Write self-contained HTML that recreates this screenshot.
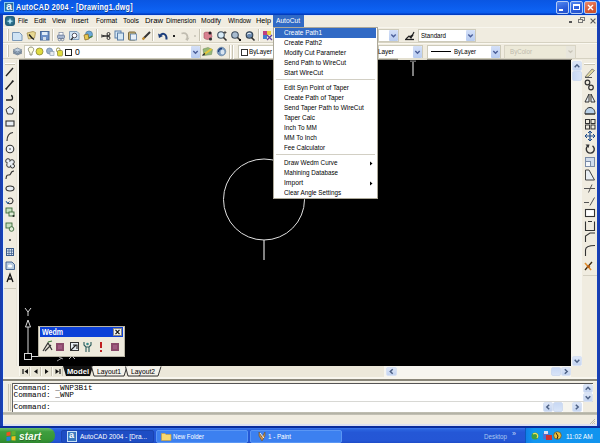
<!DOCTYPE html>
<html><head><meta charset="utf-8">
<style>
*{margin:0;padding:0;box-sizing:border-box}
html,body{width:600px;height:443px;overflow:hidden;background:#F0ECE0;font-family:"Liberation Sans",sans-serif;position:relative}
.a{position:absolute}
.t{position:absolute;white-space:nowrap;line-height:1}
svg{overflow:visible}
</style></head><body>
<div class="a" style="left:0px;top:0px;width:600px;height:15px;background:linear-gradient(#0A56E2,#0B5CEC 40%,#0E62F2 70%,#0C5EEE 85%,#0444CC 92%,#0038B8);border-radius:2px 4px 0 0"></div>
<div class="a" style="left:0px;top:15px;width:3px;height:413px;background:linear-gradient(90deg,#1C3CA4,#1442C0)"></div>
<div class="a" style="left:597px;top:15px;width:3px;height:413px;background:linear-gradient(90deg,#1442C0,#1C3CA4)"></div>
<div class="a" style="left:0px;top:426px;width:600px;height:2px;background:#0A2C9C"></div>
<div class="a" style="left:4px;top:2px;width:10px;height:10px;border:1px solid #8CCCF0;background:#2A6C9C"></div>
<div class="t" style="left:6.2px;top:1.8px;font-size:10px;color:#F0F8FF;font-weight:bold;font-family:'Liberation Sans',sans-serif;transform:scaleX(1.079);transform-origin:0 0;">a</div>
<div class="t" style="left:16px;top:3.4px;font-size:9.2px;color:#fff;font-weight:bold;font-family:'Liberation Sans',sans-serif;transform:scaleX(0.769);transform-origin:0 0;letter-spacing:0.4px;text-shadow:0.6px 0.6px 0 #0A3A98;">AutoCAD 2004 - [Drawing1.dwg]</div>
<div class="a" style="left:556px;top:1px;width:13px;height:13px;border:1px solid #B4CCF4;border-radius:2px;background:linear-gradient(160deg,#5288F0,#2A5CD8 60%,#2450CC)"></div>
<div class="a" style="left:570px;top:1px;width:13px;height:13px;border:1px solid #B4CCF4;border-radius:2px;background:linear-gradient(160deg,#5288F0,#2A5CD8 60%,#2450CC)"></div>
<div class="a" style="left:584px;top:1px;width:13px;height:13px;border:1px solid #B4CCF4;border-radius:2px;background:linear-gradient(160deg,#EC8A6A,#D45A38 60%,#C84C2C)"></div>
<div class="a" style="left:559px;top:9px;width:4px;height:2px;background:#fff"></div>
<div class="a" style="left:573px;top:4px;width:7px;height:6px;border:1px solid #fff;border-top-width:2px"></div>
<svg class="a" style="left:584px;top:1px" width="13" height="13" viewBox="0 0 13 13"><path d="M4 4L9 9M9 4L4 9" stroke="#fff" stroke-width="1.4"/></svg>
<div class="a" style="left:3px;top:15px;width:594px;height:1px;background:#DDE4F4"></div>
<div class="a" style="left:5px;top:16px;width:10px;height:10px;background:radial-gradient(#3A8AA8,#1A4E68);border-radius:3px"></div>
<svg class="a" style="left:5px;top:16px" width="10" height="10" viewBox="0 0 10 10"><path d="M5 2L6 4.5L8.5 5L6 6L5 8.5L4 6L1.5 5L4 4.5Z" fill="#B8E8F8"/></svg>
<div class="t" style="left:17.5px;top:17.6px;font-size:6.8px;color:#000;font-weight:normal;font-family:'Liberation Sans',sans-serif;transform:scaleX(0.913);transform-origin:0 0;">File</div>
<div class="t" style="left:33.5px;top:17.6px;font-size:6.8px;color:#000;font-weight:normal;font-family:'Liberation Sans',sans-serif;transform:scaleX(1.025);transform-origin:0 0;">Edit</div>
<div class="t" style="left:51.5px;top:17.6px;font-size:6.8px;color:#000;font-weight:normal;font-family:'Liberation Sans',sans-serif;transform:scaleX(0.958);transform-origin:0 0;">View</div>
<div class="t" style="left:71.5px;top:17.6px;font-size:6.8px;color:#000;font-weight:normal;font-family:'Liberation Sans',sans-serif;transform:scaleX(1.000);transform-origin:0 0;">Insert</div>
<div class="t" style="left:95.5px;top:17.6px;font-size:6.8px;color:#000;font-weight:normal;font-family:'Liberation Sans',sans-serif;transform:scaleX(0.976);transform-origin:0 0;">Format</div>
<div class="t" style="left:122.5px;top:17.6px;font-size:6.8px;color:#000;font-weight:normal;font-family:'Liberation Sans',sans-serif;transform:scaleX(1.008);transform-origin:0 0;">Tools</div>
<div class="t" style="left:144.5px;top:17.6px;font-size:6.8px;color:#000;font-weight:normal;font-family:'Liberation Sans',sans-serif;transform:scaleX(1.135);transform-origin:0 0;">Draw</div>
<div class="t" style="left:165.5px;top:17.6px;font-size:6.8px;color:#000;font-weight:normal;font-family:'Liberation Sans',sans-serif;transform:scaleX(0.934);transform-origin:0 0;">Dimension</div>
<div class="t" style="left:200.5px;top:17.6px;font-size:6.8px;color:#000;font-weight:normal;font-family:'Liberation Sans',sans-serif;transform:scaleX(0.999);transform-origin:0 0;">Modify</div>
<div class="t" style="left:227.5px;top:17.6px;font-size:6.8px;color:#000;font-weight:normal;font-family:'Liberation Sans',sans-serif;transform:scaleX(0.951);transform-origin:0 0;">Window</div>
<div class="t" style="left:255.5px;top:17.6px;font-size:6.8px;color:#000;font-weight:normal;font-family:'Liberation Sans',sans-serif;transform:scaleX(1.073);transform-origin:0 0;">Help</div>
<div class="a" style="left:273px;top:15px;width:31px;height:12px;background:#316AC5"></div>
<div class="t" style="left:275.5px;top:17.6px;font-size:6.8px;color:#fff;font-weight:normal;font-family:'Liberation Sans',sans-serif;transform:scaleX(0.977);transform-origin:0 0;">AutoCut</div>
<div class="a" style="left:568.5px;top:21px;width:3.5px;height:1.5px;background:#555"></div>
<svg class="a" style="left:578px;top:17px" width="7" height="6" viewBox="0 0 7 6"><rect x="2.5" y="0.5" width="4" height="3" fill="none" stroke="#777" stroke-width="1"/><rect x="0.5" y="2.5" width="4" height="3" fill="#F0ECE0" stroke="#777" stroke-width="1"/></svg>
<svg class="a" style="left:590px;top:18px" width="6" height="6" viewBox="0 0 6 6"><path d="M0.6 0.6L5.4 5.4M5.4 0.6L0.6 5.4" stroke="#555" stroke-width="1.1"/></svg>
<div class="a" style="left:3px;top:27px;width:594px;height:1px;background:#F8F6EE"></div>
<div class="a" style="left:3px;top:42px;width:594px;height:1px;background:#D6D2C2"></div>
<div class="a" style="left:3px;top:43px;width:594px;height:1px;background:#FAF8F0"></div>
<div class="a" style="left:3px;top:58px;width:594px;height:1px;background:#D6D2C2"></div>
<div class="a" style="left:7px;top:29px;width:2px;height:12px;border-left:1px solid #fff;border-right:1px solid #C8C4B4"></div>
<div class="a" style="left:7px;top:45px;width:2px;height:12px;border-left:1px solid #fff;border-right:1px solid #C8C4B4"></div>
<div class="a" style="left:52px;top:29px;width:2px;height:12px;border-left:1px solid #C8C4B4;border-right:1px solid #fff"></div>
<div class="a" style="left:96px;top:29px;width:2px;height:12px;border-left:1px solid #C8C4B4;border-right:1px solid #fff"></div>
<div class="a" style="left:152px;top:29px;width:2px;height:12px;border-left:1px solid #C8C4B4;border-right:1px solid #fff"></div>
<div class="a" style="left:199px;top:29px;width:2px;height:12px;border-left:1px solid #C8C4B4;border-right:1px solid #fff"></div>
<div class="a" style="left:258px;top:29px;width:2px;height:12px;border-left:1px solid #C8C4B4;border-right:1px solid #fff"></div>
<svg class="a" style="left:12px;top:31px" width="11" height="10" viewBox="0 0 11 10"><path d="M0.5 1.5H7.5L10 4V9.5H0.5Z" fill="#D0E4F4" stroke="#7A98B8" stroke-width="1"/></svg>
<svg class="a" style="left:26px;top:30px" width="11" height="11" viewBox="0 0 11 11"><path d="M1 3L7 1.5L9.5 2.5L8.5 8L2.5 9Z" fill="#E8D890" stroke="#A89050" stroke-width="0.8"/><path d="M3 4.5L5.5 7.5L8 9.5" stroke="#222" stroke-width="1.5" fill="none"/></svg>
<svg class="a" style="left:40px;top:31px" width="10" height="10" viewBox="0 0 10 10"><rect x="0.5" y="0.5" width="8.5" height="8.5" fill="#6C90C8" stroke="#4A6A9A"/><rect x="2" y="1" width="5.5" height="3" fill="#E0ECF8"/><rect x="3" y="6" width="3" height="3" fill="#D0DCEC"/></svg>
<svg class="a" style="left:56px;top:31px" width="10" height="10" viewBox="0 0 10 10"><rect x="1.5" y="4" width="7" height="3.5" rx="1" fill="#A8B8D0" stroke="#6A7A98" stroke-width="0.8"/><rect x="3" y="1.5" width="4" height="2.5" fill="#fff" stroke="#7A88A0" stroke-width="0.7"/><circle cx="3.5" cy="8.5" r="1.3" fill="none" stroke="#6A7A98" stroke-width="0.8"/><circle cx="6.5" cy="8.5" r="1.3" fill="none" stroke="#6A7A98" stroke-width="0.8"/></svg>
<svg class="a" style="left:69px;top:31px" width="11" height="10" viewBox="0 0 11 10"><path d="M0.5 0.5H8L10 2.5V8.5H0.5Z" fill="#D0E4F4" stroke="#7A98B8" stroke-width="0.9"/><circle cx="5.5" cy="4.5" r="2.3" fill="#fff" stroke="#445" stroke-width="0.9"/><path d="M4 6.3L2 9" stroke="#333" stroke-width="1.3"/></svg>
<svg class="a" style="left:83px;top:30px" width="11" height="11" viewBox="0 0 11 11"><circle cx="6" cy="4.5" r="3.5" fill="#6AA8D8" stroke="#4A7898" stroke-width="0.7"/><path d="M1 5L5 4L6 9L2 10Z" fill="#E8C850" stroke="#806020" stroke-width="0.7"/><path d="M6 8L9.5 6" stroke="#4A8030" stroke-width="1.3"/></svg>
<svg class="a" style="left:100px;top:31px" width="11" height="10" viewBox="0 0 11 10"><path d="M1 4L10 6M1 6L10 4" stroke="#333" stroke-width="1"/><circle cx="8.5" cy="3" r="1.5" fill="none" stroke="#333"/><circle cx="8.5" cy="7" r="1.5" fill="none" stroke="#333"/></svg>
<svg class="a" style="left:114px;top:30px" width="11" height="11" viewBox="0 0 11 11"><rect x="1" y="1" width="6" height="7" fill="#D6E8F4" stroke="#5A7FA8"/><rect x="3.5" y="3" width="6" height="7" fill="#D6E8F4" stroke="#5A7FA8"/></svg>
<svg class="a" style="left:127px;top:30px" width="11" height="11" viewBox="0 0 11 11"><rect x="1.5" y="2" width="7" height="8" rx="1" fill="#C8B070" stroke="#7A6A40"/><rect x="3.5" y="4" width="6" height="6" fill="#E8F0F8" stroke="#5A7FA8" stroke-width="0.8"/></svg>
<svg class="a" style="left:141px;top:30px" width="11" height="11" viewBox="0 0 11 11"><path d="M2 9L9 2" stroke="#333" stroke-width="2"/><path d="M1.5 9.5L3.5 7.5" stroke="#C89030" stroke-width="2"/></svg>
<svg class="a" style="left:157px;top:30px" width="12" height="12" viewBox="0 0 12 12"><path d="M9.5 9.5C10 4 6 2.5 3.5 5" stroke="#1A3C7A" stroke-width="2" fill="none"/><path d="M1 3.5L2 8L6 6Z" fill="#1A3C7A"/></svg>
<div class="a" style="left:173px;top:35px;width:2px;height:2px;background:#222"></div>
<svg class="a" style="left:180px;top:30px" width="11" height="12" viewBox="0 0 11 12"><path d="M1.5 3.5C6 2 8.5 5 7 9.5" stroke="#C0BCB0" stroke-width="1.8" fill="none"/><path d="M5 9L7.5 11L9.5 7.5Z" fill="#C0BCB0"/></svg>
<div class="a" style="left:194px;top:35px;width:2px;height:2px;background:#D0CCC0"></div>
<svg class="a" style="left:202px;top:30px" width="12" height="12" viewBox="0 0 12 12"><path d="M2 3C4 1 7 3 9 2L10 7C8 10 4 10 2 8Z" fill="#D88090" stroke="#A05060" stroke-width="0.6"/><circle cx="8" cy="3" r="1.5" fill="#222"/><circle cx="8.5" cy="9" r="1.6" fill="#333"/></svg>
<svg class="a" style="left:216px;top:30px" width="12" height="12" viewBox="0 0 12 12"><circle cx="5" cy="5" r="3.3" fill="#D8ECF8" stroke="#405060" stroke-width="1.1"/><path d="M7.5 7.5L10.5 10.5" stroke="#333" stroke-width="1.6"/><path d="M9 1V4M7.5 2.5H10.5" stroke="#333" stroke-width="0.8"/></svg>
<svg class="a" style="left:230px;top:30px" width="12" height="12" viewBox="0 0 12 12"><circle cx="5" cy="5" r="3.3" fill="#A8BCD0" stroke="#405060" stroke-width="1.1"/><path d="M7.5 7.5L10 10" stroke="#333" stroke-width="1.6"/><rect x="9" y="9" width="2" height="2" fill="#111"/></svg>
<svg class="a" style="left:244px;top:30px" width="12" height="12" viewBox="0 0 12 12"><circle cx="5.5" cy="5" r="3.3" fill="#6A8AB0" stroke="#304050" stroke-width="1.1"/><path d="M7.5 7.5L10.5 10.5" stroke="#333" stroke-width="1.6"/><path d="M3 4.5C4 3 6 3 7 4" stroke="#fff" stroke-width="0.9" fill="none"/></svg>
<svg class="a" style="left:262px;top:30px" width="11" height="11" viewBox="0 0 11 11"><rect x="1" y="1" width="4" height="4" fill="#C04080"/><rect x="5" y="1" width="4" height="4" fill="#E8D040"/><rect x="1" y="5" width="4" height="4" fill="#4080D0"/><path d="M5 5L10 10M10 5L5 10" stroke="#6040A0" stroke-width="1.3"/></svg>
<div class="a" style="left:378px;top:29px;width:21px;height:13px;background:#fff;border:1px solid #CDCAB9"></div>
<div class="a" style="left:389px;top:30px;width:9px;height:11px;background:linear-gradient(#D4E0F8,#B8CCF0);border-radius:1px"></div>
<svg class="a" style="left:389px;top:30px" width="9" height="11" viewBox="0 0 9 11"><path d="M2.3 4.5L4.5 6.7L6.7 4.5" stroke="#4A5E98" stroke-width="1.4" fill="none"/></svg>
<svg class="a" style="left:404px;top:31px" width="11" height="10" viewBox="0 0 11 10"><path d="M1 8.5H10" stroke="#222" stroke-width="1.3"/><path d="M2 8L5 5L7 7L10 1" stroke="#222" stroke-width="1.2" fill="none"/><path d="M6 6L9 4" stroke="#222" stroke-width="1.8"/></svg>
<div class="a" style="left:418px;top:29px;width:58px;height:13px;background:#fff;border:1px solid #CDCAB9"></div>
<div class="a" style="left:466px;top:30px;width:9px;height:11px;background:linear-gradient(#D4E0F8,#B8CCF0);border-radius:1px"></div>
<svg class="a" style="left:466px;top:30px" width="9" height="11" viewBox="0 0 9 11"><path d="M2.3 4.5L4.5 6.7L6.7 4.5" stroke="#4A5E98" stroke-width="1.4" fill="none"/></svg>
<div class="t" style="left:421px;top:32.8px;font-size:6.8px;color:#000;font-weight:normal;font-family:'Liberation Sans',sans-serif;transform:scaleX(0.906);transform-origin:0 0;">Standard</div>
<div class="a" style="left:12px;top:48px;width:10px;height:8px;"></div>
<svg class="a" style="left:12px;top:47px" width="11" height="10" viewBox="0 0 11 10"><path d="M1 6L5.5 4L10 6L5.5 8Z" fill="#8AA0B8" stroke="#5A6C80" stroke-width="0.6"/><path d="M1 4.5L5.5 2.5L10 4.5L5.5 6.5Z" fill="#A8BCD0" stroke="#5A6C80" stroke-width="0.6"/><path d="M1 3L5.5 1L10 3L5.5 5Z" fill="#C0D0E0" stroke="#5A6C80" stroke-width="0.6"/></svg>
<div class="a" style="left:24px;top:45px;width:177px;height:14px;background:#fff;border:1px solid #CDCAB9"></div>
<div class="a" style="left:191px;top:46px;width:9px;height:12px;background:linear-gradient(#D4E0F8,#B8CCF0);border-radius:1px"></div>
<svg class="a" style="left:191px;top:46px" width="9" height="12" viewBox="0 0 9 12"><path d="M2.3 5.0L4.5 7.2L6.7 5.0" stroke="#4A5E98" stroke-width="1.4" fill="none"/></svg>
<svg class="a" style="left:27px;top:46px" width="8" height="11" viewBox="0 0 8 11"><path d="M4 1C1.5 1 1 3 1.5 4.5L3 7V9H5V7L6.5 4.5C7 3 6.5 1 4 1Z" fill="#FFFDE0" stroke="#7A7A60" stroke-width="0.8"/></svg>
<svg class="a" style="left:35px;top:47px" width="10" height="10" viewBox="0 0 10 10"><circle cx="4.5" cy="4.5" r="3.5" fill="#E0DC40" stroke="#8A8430" stroke-width="0.8"/></svg>
<svg class="a" style="left:46px;top:47px" width="9" height="10" viewBox="0 0 9 10"><circle cx="3.5" cy="4" r="3" fill="#98B0CC" stroke="#7088A8" stroke-width="0.8"/><rect x="4" y="4.5" width="4" height="4" fill="#E8ECF0" stroke="#8898A8" stroke-width="0.6"/></svg>
<svg class="a" style="left:55px;top:47px" width="9" height="10" viewBox="0 0 9 10"><rect x="1.5" y="1" width="3.5" height="4" rx="1.5" fill="none" stroke="#8A8430" stroke-width="0.9"/><rect x="2.5" y="3.5" width="5" height="5.5" rx="1" fill="#E0DC40" stroke="#8A8430" stroke-width="0.7"/></svg>
<div class="a" style="left:65px;top:49px;width:7px;height:7px;border:1px solid #222;background:#fff"></div>
<div class="t" style="left:74.5px;top:48.2px;font-size:8.5px;color:#000;font-weight:normal;font-family:'Liberation Sans',sans-serif;transform:scaleX(1.015);transform-origin:0 0;">0</div>
<svg class="a" style="left:202px;top:46px" width="11" height="11" viewBox="0 0 11 11"><path d="M1 3L6 1.5L10.5 3.5L9.5 8.5L2 9.5Z" fill="#98B878" stroke="#6A8850" stroke-width="0.5"/><path d="M2.5 8L9.5 3" stroke="#E8C838" stroke-width="2"/><path d="M0.5 9.5L3 7.5" stroke="#222" stroke-width="1.2"/></svg>
<svg class="a" style="left:216px;top:46px" width="11" height="11" viewBox="0 0 11 11"><circle cx="5.5" cy="5.5" r="4.3" fill="#7C9CC0" stroke="#5A7898" stroke-width="0.6"/><ellipse cx="6.5" cy="6" rx="2" ry="2.5" fill="#D8E4F0"/><path d="M6 2.5C4 2.5 2.5 3.5 2.5 6" stroke="#1A3C7A" stroke-width="1.3" fill="none"/></svg>
<div class="a" style="left:229px;top:45px;width:2px;height:14px;border-left:1px solid #C8C4B4;border-right:1px solid #fff"></div>
<div class="a" style="left:232px;top:45px;width:2px;height:14px;border-left:1px solid #C8C4B4;border-right:1px solid #fff"></div>
<div class="a" style="left:238px;top:45px;width:140px;height:14px;background:#fff;border:1px solid #CDCAB9"></div>
<div class="a" style="left:368px;top:46px;width:9px;height:12px;background:linear-gradient(#D4E0F8,#B8CCF0);border-radius:1px"></div>
<svg class="a" style="left:368px;top:46px" width="9" height="12" viewBox="0 0 9 12"><path d="M2.3 5.0L4.5 7.2L6.7 5.0" stroke="#4A5E98" stroke-width="1.4" fill="none"/></svg>
<div class="a" style="left:241px;top:49px;width:7px;height:7px;border:1px solid #333;background:#fff"></div>
<div class="t" style="left:249px;top:49.2px;font-size:6.8px;color:#000;font-weight:normal;font-family:'Liberation Sans',sans-serif;transform:scaleX(0.922);transform-origin:0 0;">ByLayer</div>
<div class="a" style="left:378px;top:45px;width:45px;height:14px;background:#fff;border:1px solid #CDCAB9"></div>
<div class="a" style="left:413px;top:46px;width:9px;height:12px;background:linear-gradient(#D4E0F8,#B8CCF0);border-radius:1px"></div>
<svg class="a" style="left:413px;top:46px" width="9" height="12" viewBox="0 0 9 12"><path d="M2.3 5.0L4.5 7.2L6.7 5.0" stroke="#4A5E98" stroke-width="1.4" fill="none"/></svg>
<div class="t" style="left:377.5px;top:49.2px;font-size:6.8px;color:#000;font-weight:normal;font-family:'Liberation Sans',sans-serif;transform:scaleX(0.941);transform-origin:0 0;">Layer</div>
<div class="a" style="left:427px;top:45px;width:74px;height:14px;background:#fff;border:1px solid #CDCAB9"></div>
<div class="a" style="left:491px;top:46px;width:9px;height:12px;background:linear-gradient(#D4E0F8,#B8CCF0);border-radius:1px"></div>
<svg class="a" style="left:491px;top:46px" width="9" height="12" viewBox="0 0 9 12"><path d="M2.3 5.0L4.5 7.2L6.7 5.0" stroke="#4A5E98" stroke-width="1.4" fill="none"/></svg>
<div class="a" style="left:431px;top:51px;width:20px;height:1px;background:#000"></div>
<div class="t" style="left:454px;top:49.2px;font-size:6.8px;color:#000;font-weight:normal;font-family:'Liberation Sans',sans-serif;transform:scaleX(0.882);transform-origin:0 0;">ByLayer</div>
<div class="a" style="left:504px;top:45px;width:72px;height:14px;background:#ECE9D8;border:1px solid #D8D4C4"></div>
<div class="a" style="left:566px;top:46px;width:9px;height:12px;background:#E8E6DC"></div>
<svg class="a" style="left:566px;top:46px" width="9" height="12" viewBox="0 0 9 12"><path d="M2.5 4.5L4.5 6.5L6.5 4.5" stroke="#C8C4B8" stroke-width="1.2" fill="none"/></svg>
<div class="t" style="left:509.5px;top:49.2px;font-size:6.8px;color:#BDB9AC;font-weight:normal;font-family:'Liberation Sans',sans-serif;transform:scaleX(0.910);transform-origin:0 0;">ByColor</div>
<div class="a" style="left:19px;top:59px;width:553px;height:1px;background:#8E8B80"></div>
<div class="a" style="left:19px;top:60px;width:552px;height:306px;background:#000"></div>
<svg class="a" style="left:19px;top:60px" width="552" height="306" viewBox="0 0 552 306"><circle cx="245" cy="139.5" r="40.5" fill="none" stroke="#E0E0E0" stroke-width="1"/><path d="M245 180V200" stroke="#D8D8D8" stroke-width="1.2"/><path d="M394 1V16" stroke="#A8A8A8" stroke-width="1.5"/><path d="M391 1.2H397" stroke="#606060" stroke-width="1.6"/></svg>
<div class="a" style="left:398px;top:58px;width:29px;height:2px;background:#E4E0D0"></div>
<svg class="a" style="left:19px;top:300px" width="60" height="66" viewBox="0 0 60 66"><path d="M6 8L9 12L12 8M9 12V16" stroke="#D8D8D8" stroke-width="1" fill="none"/><path d="M9 20L6.5 27H11.5Z" fill="none" stroke="#D8D8D8" stroke-width="1"/><path d="M9 27V53" stroke="#D8D8D8" stroke-width="1"/><rect x="5.5" y="53.5" width="7" height="6" fill="none" stroke="#D8D8D8" stroke-width="1"/><path d="M12.5 56.5H22" stroke="#D8D8D8" stroke-width="1"/><path d="M38 61L43 58M40 57L44 59" stroke="#C0C0C0" stroke-width="0.8" fill="none"/><path d="M50 59L53 56L56 59" stroke="#D0D0D0" stroke-width="0.9" fill="none"/></svg>
<div class="a" style="left:3px;top:60px;width:1px;height:366px;background:#E4F0FA"></div>
<div class="a" style="left:16px;top:60px;width:1px;height:306px;background:#E8E4D8"></div>
<div class="a" style="left:17px;top:60px;width:2px;height:306px;background:#F4F2EA"></div>
<div class="a" style="left:5px;top:63px;width:10px;height:2px;border-top:1px solid #fff;border-bottom:1px solid #C8C4B4"></div>
<div class="a" style="left:4px;top:288px;width:12px;height:1px;background:#D0CCBC"></div>
<svg class="a" style="left:0px;top:0px" width="20" height="300" viewBox="0 0 20 300"><path d="M6 76L13 68" stroke="#222" stroke-width="1.3"/><path d="M6 89L13 81" stroke="#222" stroke-width="1.3"/><circle cx="6.3" cy="88.7" r="1" fill="#222"/><circle cx="12.7" cy="81.3" r="1" fill="#222"/><path d="M6 100H11C13 100 13 95.5 11 95.5" stroke="#222" stroke-width="1.3" fill="none"/><path d="M10 106.5L14 109.5L12.5 114H7.5L6 109.5Z" fill="#E8EEF4" stroke="#333" stroke-width="1"/><rect x="6" y="121" width="8" height="5" fill="#E8EEF4" stroke="#333" stroke-width="1.1"/><path d="M7 141C7 136 9 133 13 132.5" stroke="#333" stroke-width="1.2" fill="none"/><circle cx="10" cy="149" r="3.8" fill="#F0F4F8" stroke="#333" stroke-width="1.1"/><circle cx="10" cy="149" r="0.8" fill="#333"/><circle cx="8" cy="161" r="2.3" fill="#E8EEF4" stroke="#333" stroke-width="1"/><circle cx="12" cy="162" r="2.3" fill="#E8EEF4" stroke="#333" stroke-width="1"/><circle cx="9" cy="165" r="2.3" fill="#E8EEF4" stroke="#333" stroke-width="1"/><circle cx="12.5" cy="166" r="2" fill="#E8EEF4" stroke="#333" stroke-width="1"/><ellipse cx="10" cy="163.5" rx="2.5" ry="2" fill="#E8EEF4"/><path d="M6 179C6.5 172 9.5 177 10.5 174C11.5 171 12.5 171 14 171" stroke="#333" stroke-width="1.1" fill="none"/><ellipse cx="10" cy="188.5" rx="4" ry="2.5" fill="#E8EEF4" stroke="#333" stroke-width="1.1"/><path d="M8 198.5C12 197 14 200 12.5 202.5C11 204.5 8 204 7 202.5" stroke="#333" stroke-width="1.1" fill="none"/><path d="M6 201L7.5 203.5L9.5 201.5" stroke="#2A6AB0" stroke-width="1" fill="none"/><rect x="6" y="208" width="6" height="5" fill="#C8E0C0" stroke="#3A6A3A" stroke-width="0.9"/><rect x="9" y="212" width="5" height="4" fill="#E0ECD8" stroke="#3A6A3A" stroke-width="0.9"/><circle cx="13.5" cy="216" r="1" fill="#222"/><rect x="6" y="223" width="6" height="5" fill="#C8E0C0" stroke="#3A6A3A" stroke-width="0.9"/><circle cx="11.5" cy="229" r="2.3" fill="#E0ECD8" stroke="#3A6A3A" stroke-width="0.9"/><circle cx="10" cy="240" r="1" fill="#333"/><rect x="6.5" y="248.5" width="7" height="7" fill="#D8E4F0" stroke="#3A5A8A" stroke-width="1"/><path d="M6 251H14M6 253.5H14M9 248V256M11.5 248V256" stroke="#3A5A8A" stroke-width="0.7"/><path d="M6 262H12L14.5 264.5V269.5H6Z" fill="#B8CCE0" stroke="#3A5A8A" stroke-width="0.9"/><ellipse cx="10" cy="266" rx="2.2" ry="1.6" fill="#fff"/><path d="M7 282L10 274L13 282M8.2 279H11.8" stroke="#111" stroke-width="1.3" fill="none"/></svg>
<div class="a" style="left:571px;top:60px;width:11px;height:306px;background:#F6F5EF"></div>
<div class="a" style="left:572px;top:61px;width:10px;height:10px;background:linear-gradient(#DCE6F8,#C4D4F0);border:1px solid #D8E2F4;border-radius:2px"></div>
<svg class="a" style="left:0px;top:0px" width="1" height="1" viewBox="0 0 1 1"><path d="M574.7 67.2L577.0 64.8L579.3 67.2" stroke="#4D6185" stroke-width="1.5" fill="none"/></svg>
<div class="a" style="left:572px;top:71px;width:10px;height:10px;background:linear-gradient(90deg,#C8D8F4,#D8E4F8);border:1px solid #D0DCF0;border-radius:2px"></div>
<div class="a" style="left:572px;top:356px;width:10px;height:10px;background:linear-gradient(#DCE6F8,#C4D4F0);border:1px solid #D8E2F4;border-radius:2px"></div>
<svg class="a" style="left:0px;top:0px" width="1" height="1" viewBox="0 0 1 1"><path d="M574.7 359.8L577.0 362.2L579.3 359.8" stroke="#4D6185" stroke-width="1.5" fill="none"/></svg>
<div class="a" style="left:582px;top:60px;width:15px;height:213px;background:#F0ECE0"></div>
<div class="a" style="left:584px;top:63px;width:11px;height:2px;border-top:1px solid #fff;border-bottom:1px solid #C8C4B4"></div>
<div class="a" style="left:583px;top:275px;width:14px;height:1px;background:#D4D0C2"></div>
<svg class="a" style="left:0px;top:0px" width="1" height="1" viewBox="0 0 1 1"><path d="M585 77L592 69L594.5 70.5L588 77Z" fill="#E0D8A0" stroke="#666" stroke-width="0.7"/><path d="M585 77.5H592" stroke="#555" stroke-width="1"/><circle cx="587.5" cy="82.5" r="2.3" fill="none" stroke="#333" stroke-width="1.2"/><circle cx="591" cy="87.5" r="2.3" fill="none" stroke="#333" stroke-width="1.2"/><path d="M589.5 84.5L590 85.5" stroke="#333"/><path d="M589 102V94L585 102Z" fill="#E8EEF4" stroke="#333" stroke-width="1"/><path d="M591 102V94L595 102Z" fill="#E8EEF4" stroke="#333" stroke-width="1"/><path d="M585 114C585 110 587 107.5 590 107.5C593 107.5 595 110 595 114Z" fill="#B8D0E8" stroke="#333" stroke-width="1"/><path d="M585 114H595" stroke="#333"/><rect x="585.5" y="119.5" width="4" height="4" fill="none" stroke="#333"/><rect x="591" y="119.5" width="4" height="4" fill="none" stroke="#333"/><rect x="585.5" y="125" width="4" height="4" fill="none" stroke="#333"/><rect x="591" y="125" width="4" height="4" fill="none" stroke="#333"/><path d="M590 131V141M585 136H595" stroke="#1A4A8A" stroke-width="1.2"/><path d="M588 133L590 131L592 133M588 139L590 141L592 139M587 134L585 136L587 138M593 134L595 136L593 138" stroke="#1A4A8A" fill="none"/><path d="M587.8 146A4 4 0 1 0 592.5 145.8" stroke="#333" stroke-width="1.4" fill="none"/><path d="M585.5 144.5L589.5 144.5L588.5 148Z" fill="#333"/><rect x="585.5" y="157.5" width="9" height="9" fill="#D0DCEC" stroke="#7A8CA8"/><rect x="585.5" y="161.5" width="5" height="5" fill="#F4F8FC" stroke="#7A8CA8"/><path d="M585.5 180V170H589L594.5 180Z" fill="#E8EEF4" stroke="#444" stroke-width="1"/><path d="M584 188.5H595" stroke="#555" stroke-width="1"/><path d="M588.5 192.5L592 184.5" stroke="#555" stroke-width="1"/><path d="M584 202.5H589" stroke="#555" stroke-width="1"/><path d="M590 205.5L594.5 197.5" stroke="#555" stroke-width="1"/><rect x="585.5" y="209.5" width="9" height="7" fill="#fff" stroke="#333" stroke-width="1.1"/><path d="M585.5 221.5V230.5H594.5V221.5" fill="none" stroke="#333" stroke-width="1.1"/><path d="M588 221.5H592" stroke="#333"/><path d="M585.5 242V236L590 233H595" fill="none" stroke="#333" stroke-width="1.1"/><path d="M585.5 256V250C585.5 247 588 245.5 595 245.5" fill="none" stroke="#333" stroke-width="1.1"/><path d="M585 270L592 262" stroke="#3A2A10" stroke-width="1.4"/><path d="M585 263L591 270" stroke="#E09030" stroke-width="1.6"/><circle cx="588.5" cy="266.5" r="1.6" fill="#B86018"/></svg>
<div class="a" style="left:19px;top:366px;width:552px;height:11px;background:#ECE8DA"></div>
<div class="a" style="left:384px;top:366px;width:187px;height:11px;background:#F6F5EF"></div>
<div class="a" style="left:386px;top:367px;width:11px;height:9px;background:linear-gradient(#DCE6F8,#C4D4F0);border:1px solid #D8E2F4;border-radius:2px"></div>
<svg class="a" style="left:0px;top:0px" width="1" height="1" viewBox="0 0 1 1"><path d="M392.7 369.2L390.3 371.5L392.7 373.8" stroke="#4D6185" stroke-width="1.5" fill="none"/></svg>
<div class="a" style="left:551px;top:367px;width:10px;height:9px;background:linear-gradient(#C8D8F4,#D8E4F8);border:1px solid #D0DCF0;border-radius:2px"></div>
<div class="a" style="left:561px;top:367px;width:10px;height:9px;background:linear-gradient(#DCE6F8,#C4D4F0);border:1px solid #D8E2F4;border-radius:2px"></div>
<svg class="a" style="left:0px;top:0px" width="1" height="1" viewBox="0 0 1 1"><path d="M564.8 369.2L567.2 371.5L564.8 373.8" stroke="#4D6185" stroke-width="1.5" fill="none"/></svg>
<div class="a" style="left:19px;top:367px;width:11px;height:9px;background:#E8E5D6;border-right:1px solid #C8C4B4;border-left:1px solid #FAF8F0"></div>
<div class="a" style="left:30px;top:367px;width:11px;height:9px;background:#E8E5D6;border-right:1px solid #C8C4B4;border-left:1px solid #FAF8F0"></div>
<div class="a" style="left:41px;top:367px;width:11px;height:9px;background:#E8E5D6;border-right:1px solid #C8C4B4;border-left:1px solid #FAF8F0"></div>
<div class="a" style="left:52px;top:367px;width:11px;height:9px;background:#E8E5D6;border-right:1px solid #C8C4B4;border-left:1px solid #FAF8F0"></div>
<svg class="a" style="left:0px;top:0px" width="1" height="1" viewBox="0 0 1 1"><path d="M23 369V374" stroke="#111" stroke-width="1.2"/><path d="M28 369V374L24.5 371.5Z" fill="#111"/><path d="M37.5 369V374L34 371.5Z" fill="#111"/><path d="M45 369V374L48.5 371.5Z" fill="#111"/><path d="M55.5 369V374L59 371.5Z" fill="#111"/><path d="M60 369V374" stroke="#111" stroke-width="1.2"/></svg>
<svg class="a" style="left:0px;top:0px" width="1" height="1" viewBox="0 0 1 1"><path d="M63 366L66 376H90L93 366Z" fill="#111"/><path d="M91.5 366.5L94 376H124L127 366.5" fill="#F4F2EA" stroke="#222" stroke-width="0.9"/><path d="M125.5 366.5L128 376H158L161 366.5" fill="#F4F2EA" stroke="#222" stroke-width="0.9"/></svg>
<div class="t" style="left:67px;top:368px;font-size:7px;color:#fff;font-weight:bold;font-family:'Liberation Sans',sans-serif;transform:scaleX(1.088);transform-origin:0 0;">Model</div>
<div class="t" style="left:97px;top:368.5px;font-size:6.5px;color:#000;font-weight:normal;font-family:'Liberation Sans',sans-serif;transform:scaleX(1.038);transform-origin:0 0;">Layout1</div>
<div class="t" style="left:131px;top:368.5px;font-size:6.5px;color:#000;font-weight:normal;font-family:'Liberation Sans',sans-serif;transform:scaleX(1.038);transform-origin:0 0;">Layout2</div>
<div class="a" style="left:3px;top:377px;width:594px;height:2px;background:#F8F6EE"></div>
<div class="a" style="left:3px;top:379px;width:594px;height:2px;background:#8A877A"></div>
<div class="a" style="left:3px;top:381px;width:594px;height:1px;background:#F4F2EA"></div>
<div class="a" style="left:8px;top:384px;width:1px;height:27px;background:#C8C4B4"></div>
<div class="a" style="left:10px;top:384px;width:1px;height:27px;background:#C8C4B4"></div>
<div class="a" style="left:12px;top:383px;width:581px;height:29px;background:#fff"></div>
<div class="a" style="left:12px;top:383px;width:581px;height:1px;background:#555"></div>
<div class="a" style="left:12px;top:383px;width:1px;height:29px;background:#666"></div>
<div class="a" style="left:13px;top:401px;width:580px;height:1px;background:#D8D8D4"></div>
<div class="a" style="left:3px;top:412px;width:594px;height:3px;background:linear-gradient(#C4C2B6,#B4B3A6 50%,#C8C6BA)"></div>
<div class="a" style="left:3px;top:424px;width:594px;height:2px;background:#DCE0F2"></div>
<div class="a" style="left:583px;top:384px;width:10px;height:9px;background:linear-gradient(#DCE6F8,#C4D4F0);border:1px solid #D8E2F4;border-radius:2px"></div>
<svg class="a" style="left:0px;top:0px" width="1" height="1" viewBox="0 0 1 1"><path d="M585.7 389.7L588.0 387.3L590.3 389.7" stroke="#4D6185" stroke-width="1.5" fill="none"/></svg>
<div class="a" style="left:583px;top:393px;width:10px;height:9px;background:linear-gradient(#DCE6F8,#C4D4F0);border:1px solid #D8E2F4;border-radius:2px"></div>
<svg class="a" style="left:0px;top:0px" width="1" height="1" viewBox="0 0 1 1"><path d="M585.7 396.3L588.0 398.7L590.3 396.3" stroke="#4D6185" stroke-width="1.5" fill="none"/></svg>
<div class="a" style="left:543px;top:402px;width:10px;height:10px;background:linear-gradient(#DCE6F8,#C4D4F0);border:1px solid #D8E2F4;border-radius:2px"></div>
<svg class="a" style="left:0px;top:0px" width="1" height="1" viewBox="0 0 1 1"><path d="M549.2 404.7L546.8 407.0L549.2 409.3" stroke="#4D6185" stroke-width="1.5" fill="none"/></svg>
<div class="a" style="left:553px;top:402px;width:10px;height:10px;background:linear-gradient(#C8D8F4,#D8E4F8);border:1px solid #D0DCF0;border-radius:2px"></div>
<div class="a" style="left:563px;top:402px;width:10px;height:10px;background:#F6F5EF"></div>
<div class="a" style="left:572px;top:402px;width:10px;height:10px;background:linear-gradient(#DCE6F8,#C4D4F0);border:1px solid #D8E2F4;border-radius:2px"></div>
<svg class="a" style="left:0px;top:0px" width="1" height="1" viewBox="0 0 1 1"><path d="M575.8 404.7L578.2 407.0L575.8 409.3" stroke="#4D6185" stroke-width="1.5" fill="none"/></svg>
<div class="a" style="left:583px;top:402px;width:10px;height:10px;background:#F0ECE0"></div>
<div class="t" style="left:13.5px;top:385px;font-size:7.75px;color:#000;font-weight:normal;font-family:'Liberation Mono',monospace;">Command: _WNP3Bit</div>
<div class="t" style="left:13.5px;top:392px;font-size:7.75px;color:#000;font-weight:normal;font-family:'Liberation Mono',monospace;">Command: _WNP</div>
<div class="t" style="left:13.5px;top:404px;font-size:7.75px;color:#000;font-weight:normal;font-family:'Liberation Mono',monospace;">Command:</div>
<svg class="a" style="left:0px;top:0px" width="1" height="1" viewBox="0 0 1 1"><path d="M590 424L595 419M592 424L595 421M594 424L595 423" stroke="#B0AC9C" stroke-width="0.8"/></svg>
<div class="a" style="left:38px;top:326px;width:87px;height:31px;background:#EEEADC;border:1px solid #B8B4A4"></div>
<div class="a" style="left:40px;top:327px;width:83px;height:10px;background:#0C40D8"></div>
<div class="t" style="left:41.5px;top:329.4px;font-size:8.2px;color:#fff;font-weight:bold;font-family:'Liberation Sans',sans-serif;transform:scaleX(0.860);transform-origin:0 0;">Wedm</div>
<div class="a" style="left:113px;top:328px;width:9px;height:8px;background:#F4F2EC;border:1px solid #888"></div>
<svg class="a" style="left:113px;top:328px" width="9" height="8" viewBox="0 0 9 8"><path d="M2.5 1.8L6.5 6.2M6.5 1.8L2.5 6.2" stroke="#111" stroke-width="1.2"/></svg>
<svg class="a" style="left:0px;top:0px" width="1" height="1" viewBox="0 0 1 1"><path d="M43 351L48 343L52 350M45 351L51 345" stroke="#333" stroke-width="1.2" fill="none"/><path d="M48 342L52 341" stroke="#3A7A3A" stroke-width="1.2"/><rect x="56" y="343" width="8" height="8" fill="#8A4A6A"/><rect x="58" y="345" width="4" height="4" fill="#A05A80"/><rect x="70.5" y="342.5" width="8" height="8" fill="#E8EEF4" stroke="#333"/><path d="M71 350L76 345M73 345H77V349" stroke="#222" stroke-width="1.1" fill="none"/><path d="M84 342V345L86 347V352M91 342V345L89 347V352M86 347H89" stroke="#2A5A5A" stroke-width="1.1" fill="none"/><circle cx="87.5" cy="344" r="1.3" fill="#3A8A8A"/><path d="M101 342V348" stroke="#C02020" stroke-width="2"/><rect x="100" y="350" width="2" height="2" fill="#C02020"/><rect x="111" y="343" width="8" height="8" fill="#8A4A6A"/><rect x="113" y="345" width="4" height="4" fill="#A05A80"/></svg>
<div class="a" style="left:273px;top:27px;width:105px;height:172px;background:#fff;border:1px solid #ACA899"></div>
<div class="a" style="left:275px;top:28px;width:101px;height:10px;background:#316AC5"></div>
<div class="t" style="left:284px;top:29.5px;font-size:6.8px;color:#fff;font-weight:normal;font-family:'Liberation Sans',sans-serif;transform:scaleX(0.949);transform-origin:0 0;">Create Path1</div>
<div class="t" style="left:284px;top:39.5px;font-size:6.8px;color:#000;font-weight:normal;font-family:'Liberation Sans',sans-serif;transform:scaleX(0.949);transform-origin:0 0;">Create Path2</div>
<div class="t" style="left:284px;top:49.5px;font-size:6.8px;color:#000;font-weight:normal;font-family:'Liberation Sans',sans-serif;transform:scaleX(0.938);transform-origin:0 0;">Modify Cut Parameter</div>
<div class="t" style="left:284px;top:59.5px;font-size:6.8px;color:#000;font-weight:normal;font-family:'Liberation Sans',sans-serif;transform:scaleX(0.943);transform-origin:0 0;">Send Path to WireCut</div>
<div class="t" style="left:284px;top:69.5px;font-size:6.8px;color:#000;font-weight:normal;font-family:'Liberation Sans',sans-serif;transform:scaleX(0.956);transform-origin:0 0;">Start WireCut</div>
<div class="a" style="left:276px;top:79px;width:99px;height:1px;background:#D2CFC4"></div>
<div class="t" style="left:284px;top:84.5px;font-size:6.8px;color:#000;font-weight:normal;font-family:'Liberation Sans',sans-serif;transform:scaleX(0.940);transform-origin:0 0;">Edit Syn Point of Taper</div>
<div class="t" style="left:284px;top:94.5px;font-size:6.8px;color:#000;font-weight:normal;font-family:'Liberation Sans',sans-serif;transform:scaleX(0.957);transform-origin:0 0;">Create Path of Taper</div>
<div class="t" style="left:284px;top:104.5px;font-size:6.8px;color:#000;font-weight:normal;font-family:'Liberation Sans',sans-serif;transform:scaleX(0.945);transform-origin:0 0;">Send Taper Path to WireCut</div>
<div class="t" style="left:284px;top:114.5px;font-size:6.8px;color:#000;font-weight:normal;font-family:'Liberation Sans',sans-serif;transform:scaleX(0.954);transform-origin:0 0;">Taper Calc</div>
<div class="t" style="left:284px;top:124.5px;font-size:6.8px;color:#000;font-weight:normal;font-family:'Liberation Sans',sans-serif;transform:scaleX(0.939);transform-origin:0 0;">Inch To MM</div>
<div class="t" style="left:284px;top:134.5px;font-size:6.8px;color:#000;font-weight:normal;font-family:'Liberation Sans',sans-serif;transform:scaleX(0.939);transform-origin:0 0;">MM To Inch</div>
<div class="t" style="left:284px;top:144.5px;font-size:6.8px;color:#000;font-weight:normal;font-family:'Liberation Sans',sans-serif;transform:scaleX(0.928);transform-origin:0 0;">Fee Calculator</div>
<div class="a" style="left:276px;top:154px;width:99px;height:1px;background:#D2CFC4"></div>
<div class="t" style="left:284px;top:159.5px;font-size:6.8px;color:#000;font-weight:normal;font-family:'Liberation Sans',sans-serif;transform:scaleX(0.934);transform-origin:0 0;">Draw Wedm Curve</div>
<div class="t" style="left:284px;top:169.5px;font-size:6.8px;color:#000;font-weight:normal;font-family:'Liberation Sans',sans-serif;transform:scaleX(0.922);transform-origin:0 0;">Mahining Database</div>
<div class="t" style="left:284px;top:179.5px;font-size:6.8px;color:#000;font-weight:normal;font-family:'Liberation Sans',sans-serif;transform:scaleX(0.986);transform-origin:0 0;">Import</div>
<div class="t" style="left:284px;top:189.5px;font-size:6.8px;color:#000;font-weight:normal;font-family:'Liberation Sans',sans-serif;transform:scaleX(0.928);transform-origin:0 0;">Clear Angle Settings</div>
<svg class="a" style="left:0px;top:0px" width="1" height="1" viewBox="0 0 1 1"><path d="M370 161.5V165.5L372.5 163.5Z" fill="#000"/><path d="M370 181.5V185.5L372.5 183.5Z" fill="#000"/></svg>
<div class="a" style="left:0px;top:428px;width:600px;height:15px;background:linear-gradient(#3C78EC,#2A62DE 12%,#2457D6 30%,#2456D5 85%,#1E4CC8)"></div>
<div class="a" style="left:0px;top:428px;width:55px;height:15px;background:linear-gradient(#6CC06C,#3E9E3E 25%,#369636 75%,#2E862E);border-radius:0 7px 7px 0"></div>
<div class="t" style="left:19px;top:430.5px;font-size:10.5px;color:#F4FFF0;font-weight:bold;font-family:'Liberation Sans',sans-serif;transform:scaleX(0.967);transform-origin:0 0;font-style:italic;text-shadow:0.5px 0.5px 0 #2A6A2A;">start</div>
<svg class="a" style="left:5px;top:430px" width="12" height="12" viewBox="0 0 12 12"><path d="M1.5 2.5L5.5 1.5V5.5L1.5 6Z" fill="#F05020"/><path d="M6.5 1.3L10.5 0.5V5L6.5 5.4Z" fill="#60B030"/><path d="M1.5 7L5.5 6.5V10.5L1.5 11Z" fill="#2080E0"/><path d="M6.5 6.5L10.5 6V10.5L6.5 10.3Z" fill="#F0C020"/></svg>
<div class="a" style="left:61px;top:430px;width:93px;height:13px;background:#1E4DC4;border:1px solid #1A44B0;border-radius:2px"></div>
<div class="a" style="left:67px;top:431px;width:10px;height:11px;background:#3A7AC0;border:1px solid #C8E0F8"></div>
<div class="t" style="left:69px;top:431px;font-size:9px;color:#fff;font-weight:bold;font-family:'Liberation Sans',sans-serif;">a</div>
<div class="t" style="left:80px;top:433.5px;font-size:6.8px;color:#fff;font-weight:normal;font-family:'Liberation Sans',sans-serif;transform:scaleX(0.959);transform-origin:0 0;">AutoCAD 2004 - [Dra...</div>
<div class="a" style="left:156px;top:430px;width:92px;height:13px;background:#3C80F0;border:1px solid #5A96F4;border-radius:2px"></div>
<svg class="a" style="left:161px;top:432px" width="11" height="9" viewBox="0 0 11 9"><path d="M0.5 1.5H4L5 2.5H10V8.5H0.5Z" fill="#F8D870" stroke="#C8A040" stroke-width="0.7"/></svg>
<div class="t" style="left:173px;top:433.5px;font-size:6.8px;color:#fff;font-weight:normal;font-family:'Liberation Sans',sans-serif;transform:scaleX(0.892);transform-origin:0 0;">New Folder</div>
<div class="a" style="left:250px;top:430px;width:92px;height:13px;background:#3C80F0;border:1px solid #5A96F4;border-radius:2px"></div>
<svg class="a" style="left:257px;top:431px" width="10" height="11" viewBox="0 0 10 11"><path d="M2 1L5 6L8 1V5L5 10L2 5Z" fill="#C89050" stroke="#705020" stroke-width="0.6"/><path d="M3 2L7 7" stroke="#F0F0F0" stroke-width="1"/></svg>
<div class="t" style="left:268px;top:433.5px;font-size:6.8px;color:#fff;font-weight:normal;font-family:'Liberation Sans',sans-serif;transform:scaleX(0.909);transform-origin:0 0;">1 - Paint</div>
<div class="t" style="left:484px;top:433.5px;font-size:6.8px;color:#A8C8F0;font-weight:normal;font-family:'Liberation Sans',sans-serif;transform:scaleX(0.922);transform-origin:0 0;">Desktop</div>
<div class="t" style="left:512px;top:429.5px;font-size:7px;color:#C8DCF8;font-weight:normal;font-family:'Liberation Sans',sans-serif;transform:scaleX(1.027);transform-origin:0 0;">»</div>
<div class="a" style="left:525px;top:428px;width:75px;height:15px;background:linear-gradient(90deg,#0F80E8,#1296F0 10%,#1194EE);border-left:1px solid #0A5ABE"></div>
<svg class="a" style="left:531px;top:431px" width="10" height="10" viewBox="0 0 10 10"><circle cx="4" cy="5" r="3.5" fill="#40A040"/><path d="M2 3C5 1 8 4 6 7" stroke="#F0E060" stroke-width="1.2" fill="none"/></svg>
<svg class="a" style="left:542px;top:430px" width="11" height="11" viewBox="0 0 11 11"><rect x="1" y="3" width="6" height="6" fill="#5070D0"/><rect x="4" y="5" width="6" height="5" fill="#D03030"/><rect x="2" y="1" width="4" height="3" fill="#E0E0F0"/></svg>
<svg class="a" style="left:553px;top:430px" width="9" height="11" viewBox="0 0 9 11"><circle cx="4.5" cy="5.5" r="3.8" fill="#E8C040" stroke="#604010" stroke-width="0.6"/><path d="M3 3L5 6L4 9" stroke="#302010" stroke-width="1" fill="none"/></svg>
<div class="t" style="left:566px;top:433.5px;font-size:6.8px;color:#fff;font-weight:normal;font-family:'Liberation Sans',sans-serif;transform:scaleX(0.944);transform-origin:0 0;">11:02 AM</div>
</body></html>
